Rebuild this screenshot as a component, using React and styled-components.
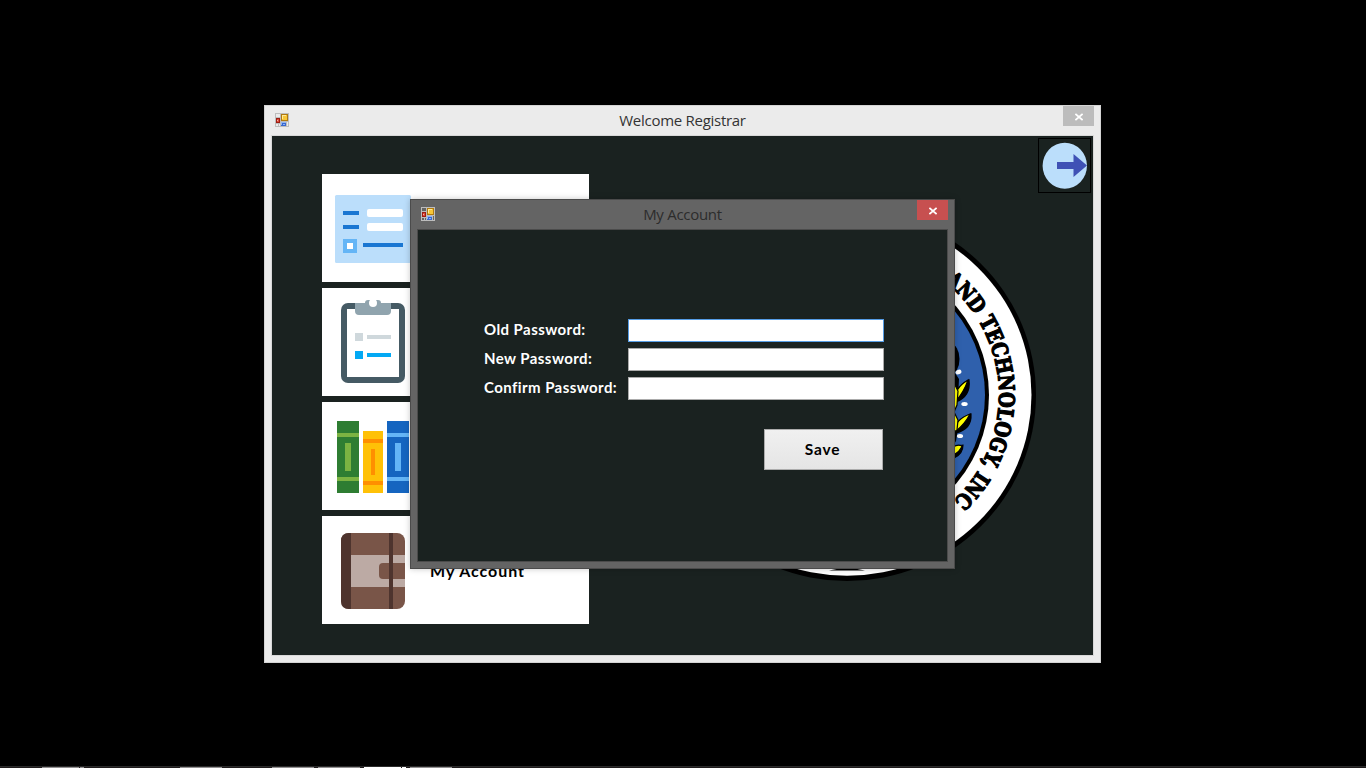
import React from 'react';
import styled, { createGlobalStyle } from 'styled-components';

const GlobalStyle = createGlobalStyle`
  * { box-sizing: border-box; }
  html, body { margin: 0; background: #000; overflow: hidden; }
  svg { display: block; }
`;

const gothic = '"Century Gothic", Lato, "Open Sans", sans-serif';

const Desktop = styled.main`
  position: relative;
  width: 1366px;
  height: 768px;
  background: #000;
  display: flex;
  flex-direction: column;
  justify-content: flex-end;
  overflow: hidden;
`;

const Taskbar = styled.div`
  height: 2px;
  padding: 1px 0 0 42px;
  background: linear-gradient(#2b2b2b 50%, #1f1b1c 50%);
  display: flex;
`;

const Task = styled.span`
  width: ${(p) => p.$w}px;
  height: 1px;
  margin-right: ${(p) => p.$gap}px;
  background: ${(p) => (p.$active ? '#fff' : '#918f90')};
`;

const Window = styled.section`
  position: absolute;
  left: ${(p) => p.$x}px;
  top: ${(p) => p.$y}px;
  width: ${(p) => p.$w}px;
  height: ${(p) => p.$h}px;
  display: flex;
  flex-direction: column;
  padding: 0 6px 6px;
  background: ${(p) => (p.$dim ? '#646464' : '#ebebeb')};
  border: 1px solid ${(p) => (p.$dim ? '#4b4b4b' : '#d4d4d4')};
  box-shadow: ${(p) => (p.$dim ? '0 0 6px rgba(0,0,0,.22)' : 'none')};
`;

const TitleBar = styled.header`
  height: 29px;
  flex: none;
  display: grid;
  grid-template-columns: 31px 1fr 31px;
  padding-left: 4px;
`;

const IconSlot = styled.div`
  padding-top: 7px;
`;

const Title = styled.h1`
  margin: 0;
  padding-right: 4px;
  text-align: center;
  white-space: nowrap;
  font: 400 15px/29px "Segoe UI", "Open Sans", "Noto Sans", sans-serif;
  letter-spacing: -.28px;
  color: ${(p) => (p.$dim ? '#2c2c2c' : '#333')};
`;

const CloseButton = styled.button`
  width: 31px;
  height: 20px;
  border: 0;
  padding: 1px 0 0 1px;
  display: flex;
  align-items: center;
  justify-content: center;
  background: ${(p) => (p.$dim ? '#c75050' : '#bcbcbc')};
`;

const Client = styled.div`
  flex: 1;
  min-height: 0;
  display: flex;
  overflow: hidden;
  background: #1a2220;
  border: 1px solid ${(p) => (p.$dim ? '#4b4b4b' : '#d8d8d8')};
`;

const Dashboard = styled.div`
  flex: 1;
  display: grid;
  grid-template-columns: 267px 1fr 53px;
  padding: 2px 2px 0 50px;
`;

const Menu = styled.nav`
  padding-top: 36px;
  display: flex;
  flex-direction: column;
  gap: 6px;
`;

const Card = styled.button`
  height: 108px;
  border: 0;
  padding: 0;
  background: #fff;
  display: flex;
  align-items: center;
  gap: 18px;
  color: #000;
`;

const CardLabel = styled.span`
  padding-top: 2px;
  font: 700 16px/20px ${gothic};
  letter-spacing: .95px;
`;

const SealArea = styled.div`
  padding: 71px 0 0 69px;
  svg { overflow: visible; }
`;

const ExitButton = styled.button`
  width: 53px;
  height: 55px;
  border: 1px solid #000;
  padding: 0;
  background: transparent;
`;

const Form = styled.form`
  flex: 1;
  padding: 89px 63px 0 66px;
  display: flex;
  flex-direction: column;
  gap: 6px;
`;

const Field = styled.label`
  display: grid;
  grid-template-columns: 144px 256px;
  height: 23px;
  font: 700 15px/20px ${gothic};
  letter-spacing: .43px;
  color: #fff;
  white-space: nowrap;
`;

const Input = styled.input`
  width: 256px;
  height: 23px;
  padding: 0 4px;
  border: 1px solid ${(p) => (p.$focused ? '#569de5' : '#ababab')};
  background: #fff;
  outline: 0;
`;

const SaveButton = styled.button`
  align-self: flex-end;
  width: 119px;
  height: 41px;
  margin: 23px 1px 0 0;
  padding: 0 2px 2px 0;
  border: 1px solid #acacac;
  background: linear-gradient(#f0f0f0, #e5e5e5);
  font: 700 15.5px/20px ${gothic};
  letter-spacing: .8px;
  color: #000;
`;

const FormIcon = () => (
  <svg width="14" height="14" shapeRendering="crispEdges">
    <path fill="#bdbdbd" fillRule="evenodd" d="M0 0h14v14H0zM1 1v3h4V1zM1 11v2h2v-2zM4 11v2h1v-2zM12 9v4h1V9z" />
    <path fill="#b07a10" d="M6 1h7v7H6z" />
    <path fill="#f6c638" d="M7 2h5v5H7z" />
    <path fill="#ffe99a" d="M7 2h4v1H8v3H7z" />
    <path fill="#9c1d12" d="M1 5h4v5H1z" />
    <path fill="#e04b3c" d="M2 6h2v3H2z" />
    <path fill="#f5b1a8" d="M2 7h1v1H2z" />
    <path fill="#3767cf" d="M6 9h5v4H6z" />
    <path fill="#8fb4f4" d="M6 9h5v1H7v2H6zM8 11h2v1H8z" />
  </svg>
);

const Cross = () => (
  <svg width="8" height="8" viewBox="0 0 8 8">
    <path d="M.4.9 7.6 7.1M7.600.900.400 7.100" stroke="#fff" strokeWidth="1.800" />
  </svg>
);

const R = ({ x, y, w, h, f, r }) => <rect x={x} y={y} width={w} height={h} fill={f} rx={r} />;

const RecordIcon = () => (
  <svg width="90" height="108">
    <R x="13" y="21" w="76" h="68" f="#bbdefb" r="1.5" />
    <R x="21" y="37" w="16" h="4" f="#1976d2" />
    <R x="21" y="51" w="16" h="4" f="#1976d2" />
    <R x="45" y="35" w="36" h="8" f="#fff" r="2" />
    <R x="45" y="49" w="36" h="8" f="#fff" r="2" />
    <R x="21" y="65" w="14" h="14" f="#64b5f6" />
    <R x="25" y="69" w="6" h="6" f="#fff" />
    <R x="41" y="69" w="40" h="4" f="#1976d2" />
  </svg>
);

const ClipboardIcon = () => (
  <svg width="90" height="108">
    <R x="19" y="15" w="64" h="80" f="#455a64" r="7" />
    <R x="25" y="21" w="52" h="68" f="#fff" />
    <path fill="#90a4ae" d="M33 15h10q0-3 3-3h10q3 0 3 3h10v8q0 4-4 4H37q-4 0-4-4z" />
    <circle cx="51" cy="15" r="4" fill="#fff" />
    <R x="33" y="45" w="8" h="8" f="#cfd8dc" />
    <R x="45" y="47" w="24" h="4" f="#cfd8dc" />
    <R x="33" y="63" w="8" h="8" f="#03a9f4" />
    <R x="45" y="65" w="24" h="4" f="#03a9f4" />
  </svg>
);

const BooksIcon = () => (
  <svg width="90" height="108">
    <R x="15" y="19" w="22" h="72" f="#2e7d32" />
    <path fill="#7cb342" d="M15 31h22v4H15zM15 75h22v4H15zM23 41h6v28h-6z" />
    <R x="41" y="29" w="20" h="62" f="#ffc107" />
    <path fill="#ff8f00" d="M41 37h20v4H41zM41 79h20v4H41zM49 47h4v26h-4z" />
    <R x="65" y="19" w="22" h="72" f="#1565c0" />
    <path fill="#64b5f6" d="M65 31h22v4H65zM65 75h22v4H65zM73 41h6v28h-6z" />
  </svg>
);

const WalletIcon = () => (
  <svg width="90" height="108">
    <R x="19" y="17" w="64" h="76" f="#795548" r="8" />
    <path fill="#4e342e" d="M29 17h-2q-8 0-8 8v60q0 8 8 8h2z" />
    <R x="29" y="39" w="54" h="32" f="#bcaaa4" />
    <path fill="#795548" d="M83 47H61q-4 0-4 4v8q0 4 4 4h22z" />
    <R x="67" y="17" w="4" h="76" f="#4e342e" />
  </svg>
);

const ExitIcon = () => (
  <svg width="51" height="53">
    <ellipse cx="25.8" cy="26.7" rx="22.2" ry="23" fill="#bbdefb" />
    <path fill="#3f51b5" d="M18 23h16.500v-8L48 26.500 34.500 38v-8H18z" />
  </svg>
);

/* Seal coordinates are centred on the middle of its rings. */
const Seal = () => (
  <svg width="378" height="372" viewBox="-189 -186 378 372">
    <ellipse rx="189" ry="186" />
    <ellipse rx="184.500" ry="180.800" fill="#fff" />
    <path d="M-18 175.500Q0 171 18 175.500Z" />
    <ellipse rx="142" ry="138.500" />
    <ellipse rx="138" ry="134.500" fill="#2f60ac" />
    <path id="sealText" d="M0-148A152 148 0 0 1 0 148" fill="none" />
    <text fontFamily='"DejaVu Serif", serif' fontWeight="700" fontSize="21.500" stroke="#000" strokeWidth="1.300">
      <textPath href="#sealText" startOffset="105" textLength="249" lengthAdjust="spacingAndGlyphs">AND TECHNOLOGY, INC</textPath>
    </text>
    <ellipse cx="104" cy="-36" rx="8.500" ry="15" />
    <path d="M104-28l8 12-1 20-7 12zM104 24l8 4-3 18-5 8z" />
    <g stroke="#000" strokeWidth="1.200">
      <path d="M109 7Q124 1 122-15Q106-7 109 7Z" />
      <path d="M109 6Q106-6 121-15Q117-3 109 6Z" fill="#ff0" />
      <path d="M109 38Q125 34 124 19Q108 24 109 38Z" />
      <path d="M108 37Q107 25 123 19Q118 29 108 37Z" fill="#ff0" />
      <path d="M107 63Q116 59 116 50Q107 50 104 61Z" />
      <path d="M106 60V52Q111 49 115 51Q113 57 106 60Z" fill="#ff0" />
      <path d="M107-12l4 8-1 14-3 7zM107 17l4 8-1 10-3 2z" fill="#ff0" />
    </g>
    <g fill="#fff">
      <ellipse cx="111.500" cy="-23" rx="3" ry="2.300" transform="rotate(-25 111.500 -23)" />
      <ellipse cx="117.500" cy="9" rx="3.200" ry="2.100" />
      <ellipse cx="113" cy="41" rx="3.100" ry="2" />
    </g>
  </svg>
);

const tasks = [
  [37, 1], [4, 96], [42, 50], [42, 4], [42, 4], [37, 1, true], [4, 4, true], [42, 0],
];

export default function App() {
  return (
    <>
      <GlobalStyle />
      <Desktop>
        <Window $x={264} $y={105} $w={837} $h={558}>
          <TitleBar>
            <IconSlot><FormIcon /></IconSlot>
            <Title>Welcome Registrar</Title>
            <CloseButton aria-label="Close"><Cross /></CloseButton>
          </TitleBar>
          <Client>
            <Dashboard>
              <Menu>
                <Card><RecordIcon /></Card>
                <Card><ClipboardIcon /></Card>
                <Card><BooksIcon /></Card>
                <Card><WalletIcon /><CardLabel>My Account</CardLabel></Card>
              </Menu>
              <SealArea><Seal /></SealArea>
              <ExitButton aria-label="Exit"><ExitIcon /></ExitButton>
            </Dashboard>
          </Client>
        </Window>

        <Window $dim $x={410} $y={199} $w={545} $h={370}>
          <TitleBar>
            <IconSlot><FormIcon /></IconSlot>
            <Title $dim>My Account</Title>
            <CloseButton $dim aria-label="Close"><Cross /></CloseButton>
          </TitleBar>
          <Client $dim>
            <Form>
              <Field>Old Password:<Input $focused /></Field>
              <Field>New Password:<Input /></Field>
              <Field>Confirm Password:<Input /></Field>
              <SaveButton type="button">Save</SaveButton>
            </Form>
          </Client>
        </Window>

        <Taskbar>
          {tasks.map(([w, gap, active], i) => <Task key={i} $w={w} $gap={gap} $active={active} />)}
        </Taskbar>
      </Desktop>
    </>
  );
}
